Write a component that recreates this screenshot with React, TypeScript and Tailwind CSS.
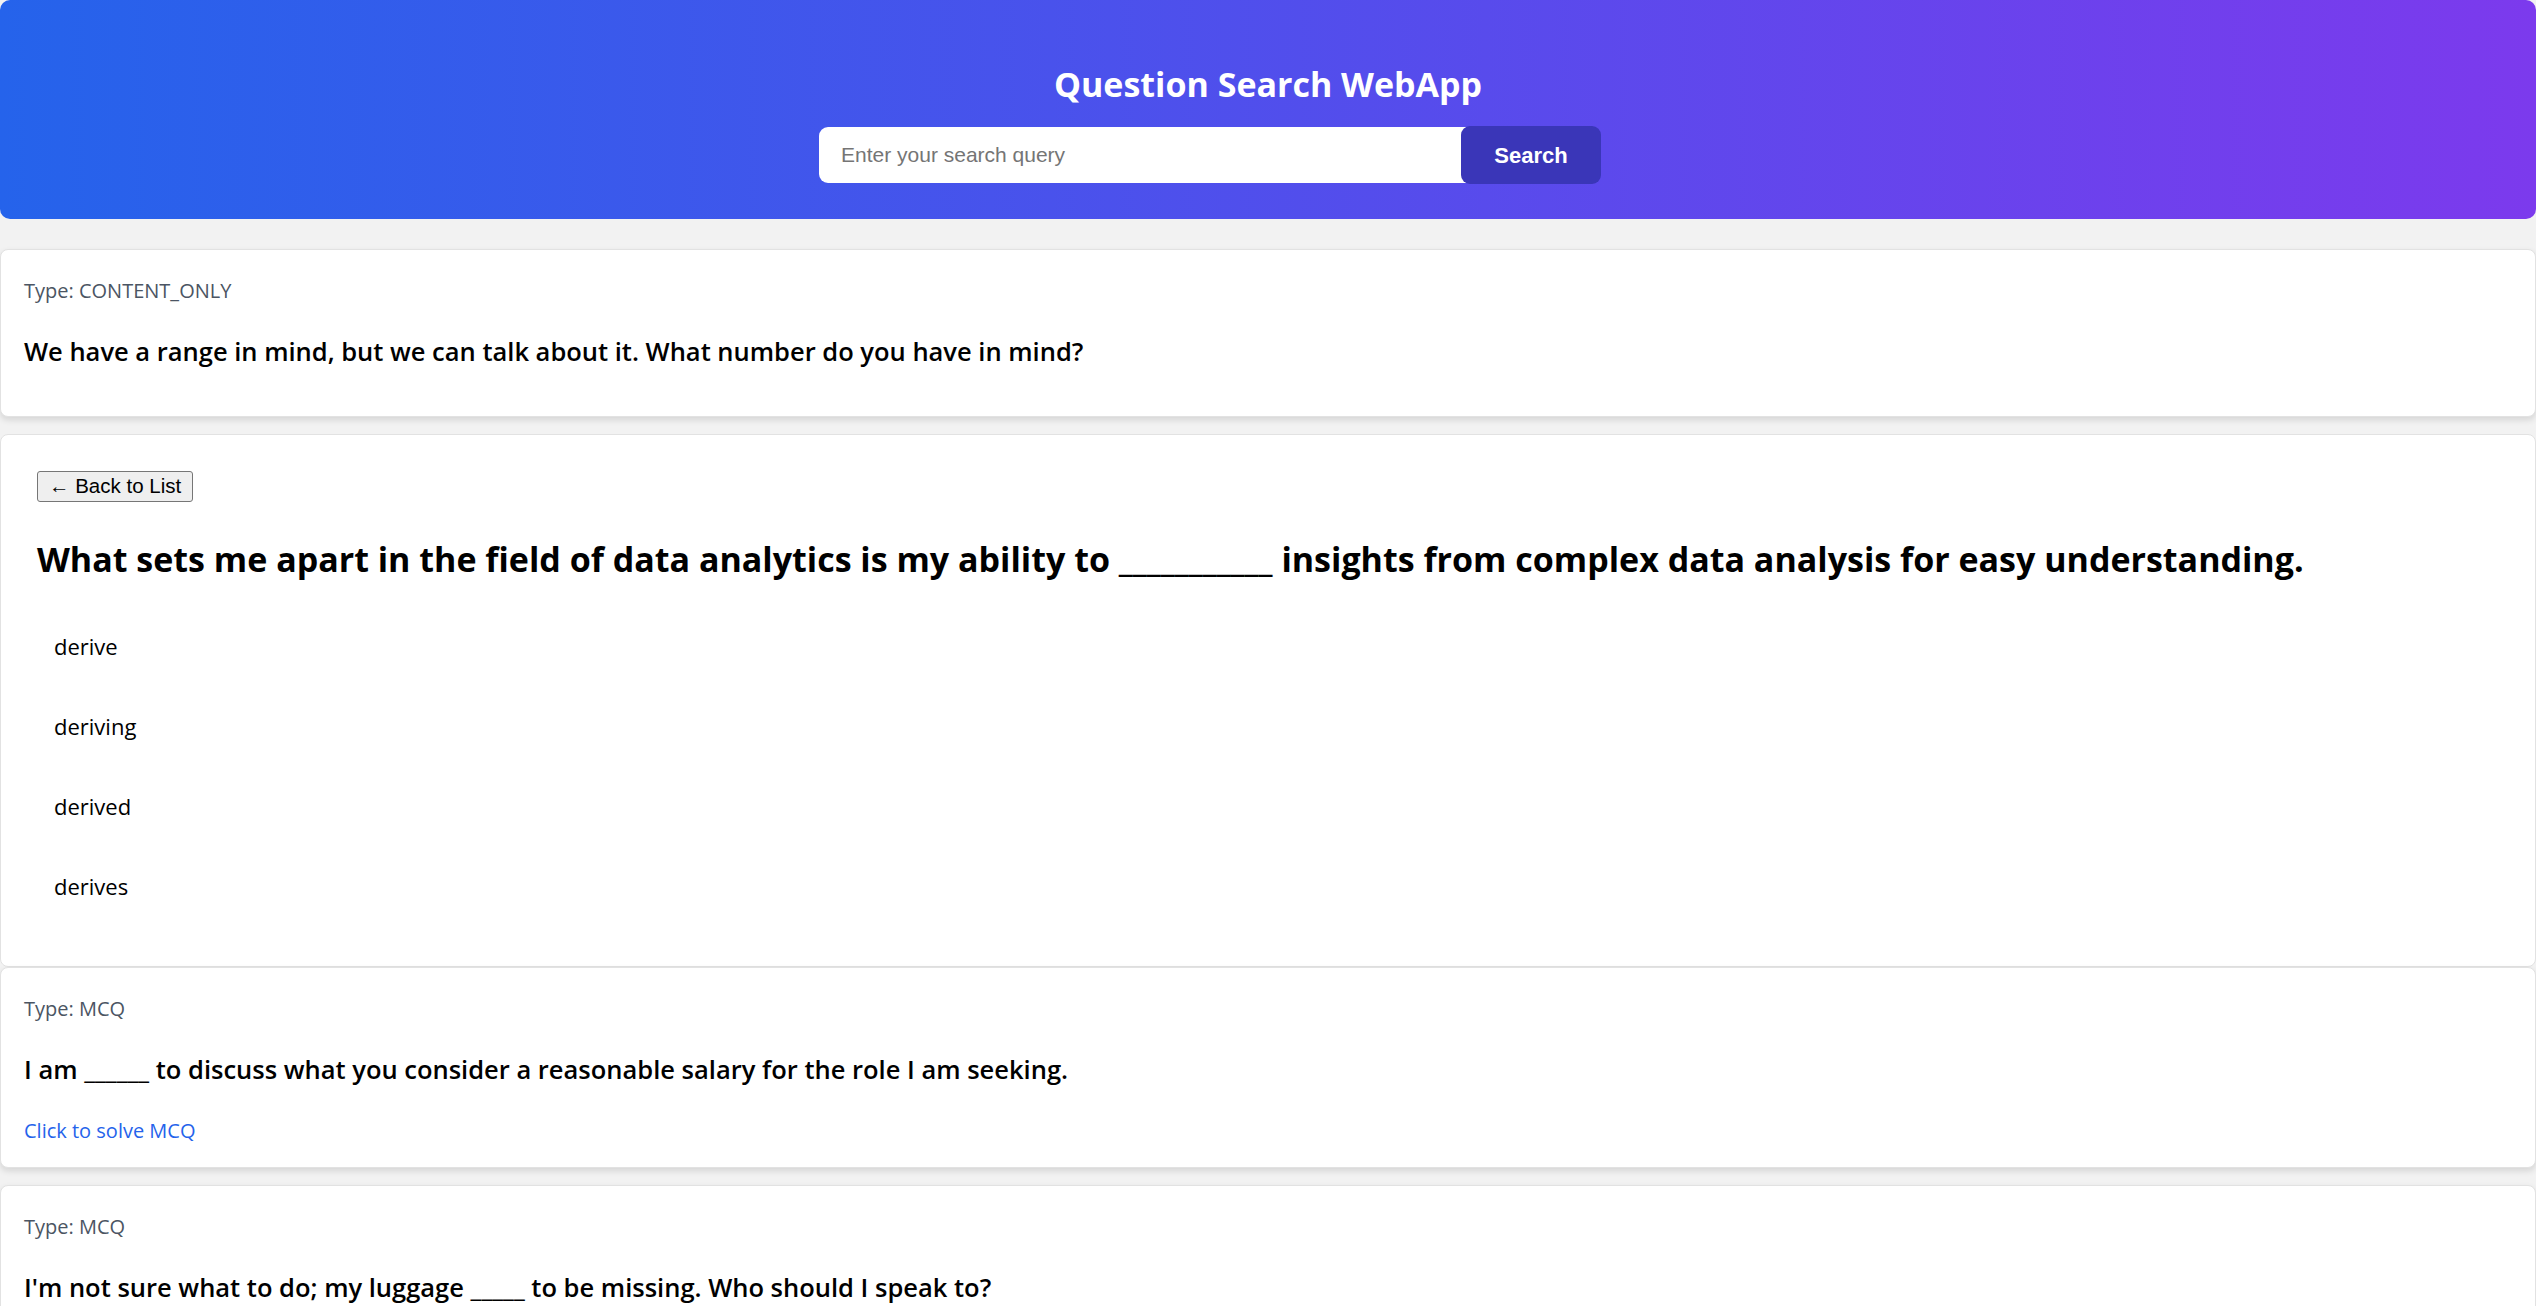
import React from 'react';

type Question = {
    type: string;
    title: string;
    solvable?: boolean;
};

const before: Question[] = [
    {
        type: 'CONTENT_ONLY',
        title: 'We have a range in mind, but we can talk about it. What number do you have in mind?',
    },
];

const after: Question[] = [
    {
        type: 'MCQ',
        title: 'I am ______ to discuss what you consider a reasonable salary for the role I am seeking.',
        solvable: true,
    },
    {
        type: 'MCQ',
        title: "I'm not sure what to do; my luggage _____ to be missing. Who should I speak to?",
        solvable: true,
    },
];

const options = ['derive', 'deriving', 'derived', 'derives'];

const QuestionCard = ({ q, last }: { q: Question; last?: boolean }) => (
    <div
        className={`flex flex-col bg-white border border-[#e2e2e2] rounded-lg shadow-[0_3px_6px_rgba(0,0,0,0.12)] px-[23px] pt-[27px] pb-[22px] ${
            last ? '' : 'mb-[17px]'
        }`}
    >
        <p className="text-[20px] leading-[28px] text-[#4b5563]">Type: {q.type}</p>
        <h3 className="mt-[28px] mb-[25px] text-[25.5px] leading-[36px] font-semibold text-black">{q.title}</h3>
        {q.solvable && (
            <p className="mt-[5px] text-[20px] leading-[28px] text-[#2563eb] cursor-pointer">Click to solve MCQ</p>
        )}
    </div>
);

const App = () => {
    return (
        <div className="min-h-screen bg-[#f2f2f2] font-['Open_Sans',sans-serif]">
            {/* Header */}
            <header className="rounded-[10px] bg-[linear-gradient(to_right,#2563eb,#7c3aed)] pt-[64px] pb-[35px]">
                <h1 className="text-center text-white text-[34px] leading-[40px] font-bold">Question Search WebApp</h1>
                <form className="mt-[22px] mx-auto w-[898px] flex items-center" onSubmit={(e) => e.preventDefault()}>
                    <input
                        type="text"
                        placeholder="Enter your search query"
                        className="w-[648px] h-[56px] rounded-l-[9px] bg-white pl-[22px] text-[21px] font-['Liberation_Sans',Arial,sans-serif] placeholder:text-[#757575] outline-none"
                    />
                    <button
                        type="submit"
                        className="-ml-[6px] w-[140px] h-[58px] rounded-[9px] bg-[#3a36b8] text-white text-[22px] font-bold font-['Liberation_Sans',Arial,sans-serif]"
                    >
                        Search
                    </button>
                </form>
            </header>

            {/* Results */}
            <div className="mt-[30px]">
                {before.map((q, i) => (
                    <QuestionCard key={i} q={q} last={false} />
                ))}

                {/* Selected question */}
                <div className="bg-white border border-[#e2e2e2] rounded-lg px-[36px] pt-[36px] pb-[40px]">
                    <button className="h-[31px] px-[11px] bg-[#efefef] border border-[#767676] rounded-[3px] text-[20.5px] leading-none text-black font-['Liberation_Sans',Arial,sans-serif]">
                        ← Back to List
                    </button>
                    <h2 className="mt-[35px] text-[34px] leading-[44px] font-bold text-black">
                        What sets me apart in the field of data analytics is my ability to ___________ insights from complex data analysis for easy understanding.
                    </h2>
                    <ul className="mt-[25px]">
                        {options.map((opt) => (
                            <li key={opt} className="py-[23px] px-[17px] text-[22px] leading-[34px] text-black cursor-pointer">
                                {opt}
                            </li>
                        ))}
                    </ul>
                </div>

                {after.map((q, i) => (
                    <QuestionCard key={i} q={q} last={i === after.length - 1} />
                ))}
            </div>
        </div>
    );
};

export default App;
